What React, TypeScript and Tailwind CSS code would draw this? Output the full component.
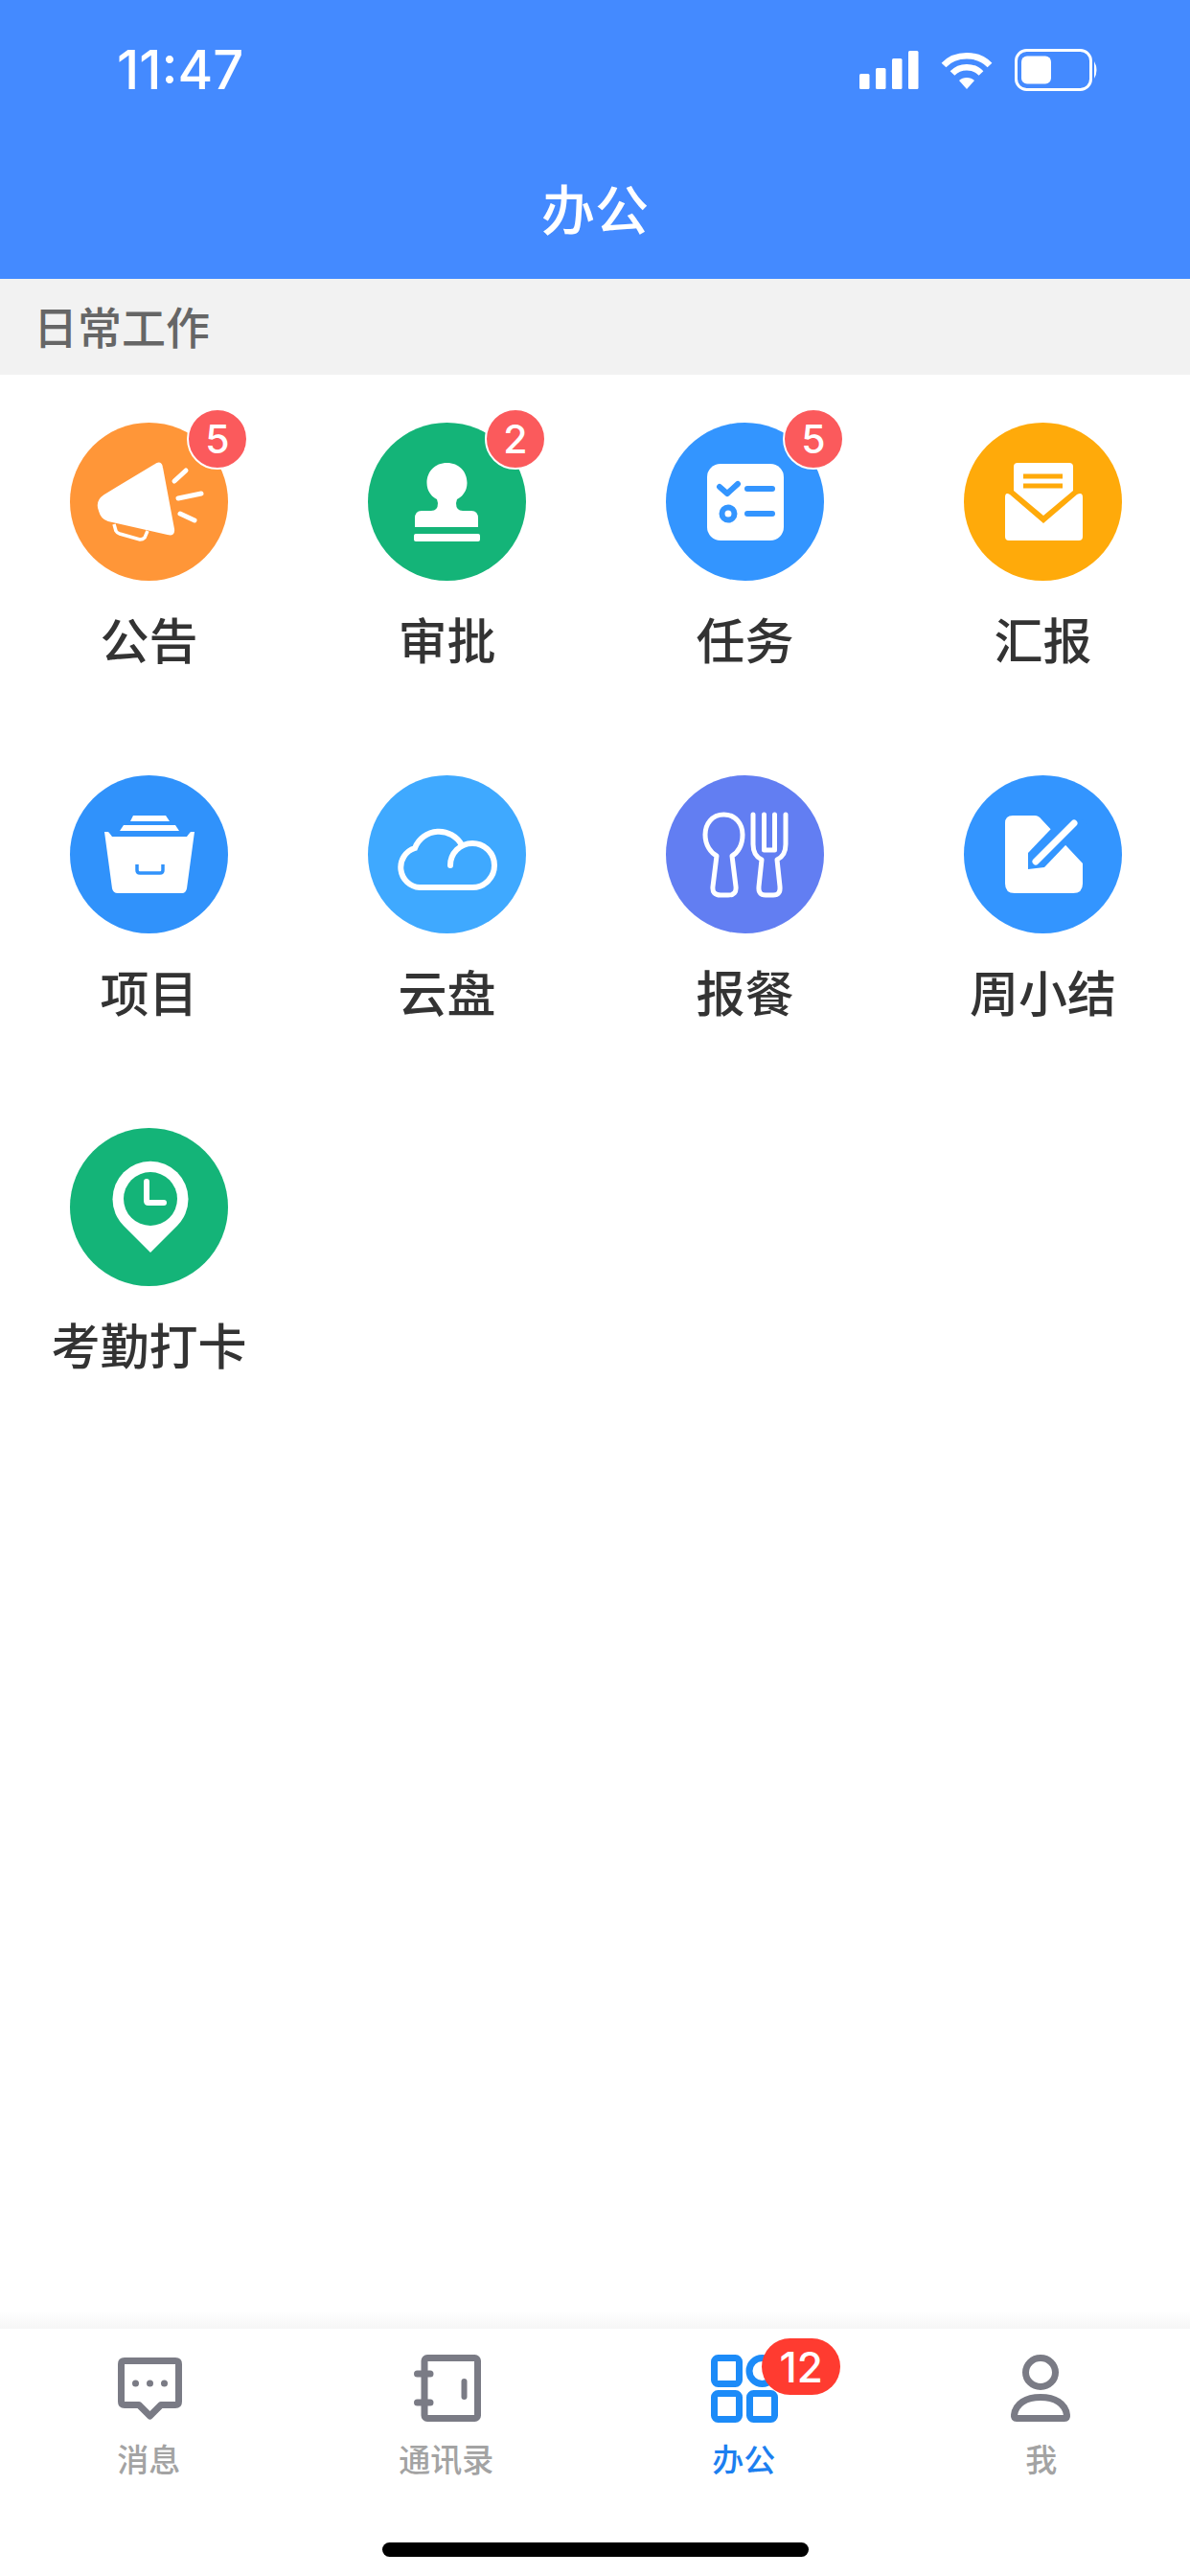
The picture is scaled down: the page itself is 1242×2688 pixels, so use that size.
import type { ReactNode } from "react";

const CJK = "font-['Noto_Sans_CJK_SC','Noto_Sans',sans-serif]";

type App = { name: string; color: string; badge?: number; glyph: ReactNode };

const megaphone = (
  <>
    <path d="M89 44 Q95 40 96 47 L108 111 Q109 118 102 116 L40 102 Q33 100 31 92 Q27 82 36 76 Z" fill="#fff" stroke="#fff" strokeWidth="2" strokeLinejoin="round" />
    <path d="M46 106 L48 113 Q49 115 52 116 L73 122 Q76 122 78 120 L81 113" fill="none" stroke="#fff" strokeWidth="3.5" />
    <g stroke="#fff" strokeWidth="5" strokeLinecap="round">
      <path d="M109 61 L121 50" />
      <path d="M113 79 L137 74" />
      <path d="M115 95 L130 102" />
    </g>
  </>
);

const stamp = (
  <>
    <path d="M82.5 42 C70 42 61.5 51 61.5 63 C61.5 71 66 77 72 80 L73 84 Q73 92 66 92 H56 Q49 92 49 100 V109 H115 V100 Q115 92 108 92 H99 Q92 92 92 84 L93 80 C99 77 103.5 71 103.5 63 C103.5 51 95 42 82.5 42 Z" fill="#fff" />
    <rect x="48" y="116" width="69" height="8" rx="2" fill="#fff" />
  </>
);

const checklist = (
  <>
    <rect x="43" y="43" width="80" height="80" rx="14" fill="#fff" />
    <g fill="none" stroke="#3395ff" strokeLinecap="round" strokeLinejoin="round" strokeWidth="6">
      <path d="M56 67 L64 74 L75 64" />
      <path d="M85 69 H111" />
      <path d="M85 95 H111" />
      <circle cx="65" cy="95" r="6.5" />
    </g>
  </>
);

const envelope = (
  <>
    <path d="M43 78 Q43 72 48 75 L83 105 L118 75 Q124 72 124 78 V119 Q124 123 120 123 H47 Q43 123 43 119 Z" fill="#fff" />
    <path d="M52 46 Q52 42 56 42 H110 Q114 42 114 46 V71 L83 97 L52 71 Z" fill="#fff" />
    <path d="M62 56 H103 M62 66 H103" stroke="#ffaa0a" strokeWidth="5" />
  </>
);

const basket = (
  <>
    <path d="M36 59 L40 59 Q42 61 44 64 H122 Q124 61 126 59 H130 L122 118 Q121 123 117 123 H50 Q45 123 44 118 Z" fill="#fff" />
    <path d="M56 52 H110 L114 58 H52 Z" fill="#fff" />
    <path d="M66 42 H100 L104 48 H63 Z" fill="#fff" />
    <path d="M70 93 V99 Q70 102 73 102 H94 Q97 102 97 99 V93" fill="none" stroke="#3092fb" strokeWidth="3.5" />
  </>
);

const cloud = (
  <path d="M54 117 H109 A23 23 0 0 0 109 71 A23 23 0 0 0 86 94 M54 117 A21 21 0 0 1 49 76 A27 27 0 0 1 98 73" fill="none" stroke="#fff" strokeWidth="6" strokeLinecap="round" />
);

const cutlery = (
  <g fill="none" stroke="#fff" strokeWidth="5" strokeLinejoin="round" strokeLinecap="round">
    <path d="M60.5 41 C48 41 41 51 41 62 C41 73 47 81 53 84 L49 116 Q48 125 57 125 H65 Q74 125 73 116 L69 84 C75 81 80 73 80 62 C80 51 73 41 60.5 41 Z" />
    <path d="M91 41 V72 Q91 84 100 88 L97 116 Q96 125 104 125 H112 Q120 125 119 116 L116 88 Q125 84 125 72 V41 M102.5 41 V78 H113.5 V41" />
  </g>
);

const noteEdit = (
  <>
    <path d="M51 42 H74 Q78 42 81 46 L124 92 V113 Q124 123 114 123 H53 Q43 123 43 113 V50 Q43 42 51 42 Z" fill="#fff" />
    <path d="M67 98 V81 L110 36 L128 50 L84 96 Z" fill="#3395ff" />
    <path d="M75 90 L115 50" stroke="#fff" strokeWidth="7" strokeLinecap="round" />
  </>
);

const clockPin = (
  <>
    <path d="M84 130 L56 102 A39.5 39.5 0 1 1 112 102 Z" fill="#fff" />
    <circle cx="84" cy="74" r="28" fill="#14b478" />
    <path d="M80 56 V76 Q80 78 82 78 H98" fill="none" stroke="#fff" strokeWidth="6" strokeLinecap="round" />
  </>
);

const apps: App[] = [
  { name: "公告", color: "bg-[#ff9638]", badge: 5, glyph: megaphone },
  { name: "审批", color: "bg-[#14b478]", badge: 2, glyph: stamp },
  { name: "任务", color: "bg-[#3395ff]", badge: 5, glyph: checklist },
  { name: "汇报", color: "bg-[#ffaa0a]", glyph: envelope },
  { name: "项目", color: "bg-[#3092fb]", glyph: basket },
  { name: "云盘", color: "bg-[#3fa9ff]", glyph: cloud },
  { name: "报餐", color: "bg-[#627ef2]", glyph: cutlery },
  { name: "周小结", color: "bg-[#3395ff]", glyph: noteEdit },
  { name: "考勤打卡", color: "bg-[#14b478]", glyph: clockPin },
];

function StatusBar() {
  return (
    <div className="flex h-[146px] items-center justify-between pl-[122px] pr-[95px] text-white">
      <span className="font-['Inter',sans-serif] text-[56px] leading-none font-medium">11:47</span>
      <div className="flex items-center gap-[23px]">
        <svg width="62" height="40" viewBox="0 0 62 40" fill="#fff">
          <rect x="0" y="24" width="10.5" height="16" rx="1.5" />
          <rect x="17" y="18" width="10.5" height="22" rx="1.5" />
          <rect x="34" y="8" width="10.5" height="32" rx="1.5" />
          <rect x="51" y="0" width="10.5" height="40" rx="1.5" />
        </svg>
        <svg width="54" height="40" viewBox="0 0 54 40" fill="none" stroke="#fff" strokeWidth="6.5">
          <path d="M3 15 C15 2 39 2 51 15" />
          <path d="M12 23.5 C20 15 34 15 42 23.5" />
          <path d="M27 40 L19 31 C23 27 31 27 35 31 Z" fill="#fff" stroke="none" />
        </svg>
        <svg width="88" height="44" viewBox="0 0 88 44" fill="none">
          <rect x="1.5" y="1.5" width="78" height="41" rx="11" stroke="#fff" strokeWidth="3" />
          <rect x="7" y="7.5" width="31" height="29" rx="6" fill="#fff" />
          <path d="M83 13 Q88 22 83 31 Z" fill="#fff" />
        </svg>
      </div>
    </div>
  );
}

function AppTile({ app }: { app: App }) {
  return (
    <div className="flex flex-col items-center">
      <div className={`relative h-[165px] w-[165px] rounded-full ${app.color}`}>
        <svg width="165" height="165" viewBox="0 0 165 165">{app.glyph}</svg>
        {app.badge !== undefined && (
          <span className="absolute -right-[21px] -top-[15px] flex h-[64px] w-[64px] items-center justify-center rounded-full border-2 border-white bg-[#fb5a5c] font-['Inter',sans-serif] text-[41px] leading-none font-medium text-white">
            {app.badge}
          </span>
        )}
      </div>
      <span className={`mt-[30px] h-[64px] whitespace-nowrap text-[51px] leading-[60px] font-medium text-[#333] ${CJK}`}>
        {app.name}
      </span>
    </div>
  );
}

const GRAY = "#7a7b85";
const BLUE = "#1c8bf8";

function TabBar() {
  return (
    <div className="flex h-[258px] flex-col items-center bg-white">
      <div className="grid w-full grid-cols-4 pt-[26px]">
        <Tab label="消息">
          <svg width="72" height="72" viewBox="0 0 72 72" fill="none" stroke={GRAY} strokeWidth="7" strokeLinejoin="round">
            <path d="M11 7.5 H64 Q67.5 7.5 67.5 11 V50 Q67.5 53.5 64 53.5 H49 L37.5 65 L26 53.5 H11 Q7.5 53.5 7.5 50 V11 Q7.5 7.5 11 7.5 Z" />
            <g fill={GRAY} stroke="none">
              <circle cx="22.5" cy="31" r="3.5" />
              <circle cx="37.5" cy="31" r="3.5" />
              <circle cx="52.5" cy="31" r="3.5" />
            </g>
          </svg>
        </Tab>
        <Tab label="通讯录">
          <svg width="72" height="72" viewBox="0 0 72 72" fill="none" stroke={GRAY} strokeWidth="7" strokeLinecap="round" className="overflow-visible">
            <rect x="13" y="4.5" width="55.5" height="63" rx="3" />
            <path d="M5.5 21 H19 M5.5 51 H19" />
            <path d="M54.5 29 V45" strokeWidth="6" />
          </svg>
        </Tab>
        <Tab label="办公" active badge="12">
          <svg width="72" height="72" viewBox="0 0 72 72" fill="none" stroke={BLUE} strokeWidth="7">
            <rect x="5.5" y="4.5" width="26" height="27" rx="4" />
            <circle cx="55.5" cy="18" r="13.5" />
            <rect x="5.5" y="41.5" width="26" height="27" rx="4" />
            <rect x="42.5" y="41.5" width="26" height="27" rx="4" />
          </svg>
        </Tab>
        <Tab label="我">
          <svg width="72" height="72" viewBox="0 0 72 72" fill="none" stroke={GRAY} strokeWidth="7" strokeLinejoin="round">
            <ellipse cx="35" cy="19.5" rx="15.5" ry="15" />
            <path d="M10 67.5 H60 Q63 67.5 62.5 64 C61 52 50 45.5 35 45.5 C20 45.5 9 52 7.5 64 Q7 67.5 10 67.5 Z" />
          </svg>
        </Tab>
      </div>
      <div className="mb-[20px] mt-auto h-[15px] w-[445px] rounded-full bg-black" />
    </div>
  );
}

function Tab({ label, active, badge, children }: { label: string; active?: boolean; badge?: string; children: ReactNode }) {
  return (
    <div className="flex flex-col items-center">
      <div className="relative h-[72px] w-[72px]">
        {children}
        {badge && (
          <span className="absolute -top-[16px] left-[55px] flex h-[59px] w-[82px] items-center justify-center rounded-full bg-[#ff3b30] font-['Inter',sans-serif] text-[44px] leading-none font-medium text-white">
            {badge}
          </span>
        )}
      </div>
      <span className={`mt-[17px] text-[33px] leading-[40px] font-medium ${active ? "text-[#1c7ff0]" : "text-[#a3a3a3]"} ${CJK}`}>
        {label}
      </span>
    </div>
  );
}

export default function App() {
  return (
    <div className="flex h-[2688px] w-[1242px] flex-col overflow-hidden bg-white">
      <header className="h-[291px] bg-[#448aff]">
        <StatusBar />
        <h1 className={`flex h-[140px] items-center justify-center text-[56px] font-medium text-white ${CJK}`}>办公</h1>
      </header>
      <div className={`flex h-[100px] items-center bg-[#f2f2f2] pb-[4px] pl-[35px] text-[46px] leading-none text-[#666] font-medium ${CJK}`}>
        日常工作
      </div>
      <main className="grid grid-cols-[repeat(4,311px)] gap-y-[109px] pt-[50px]">
        {apps.map((app) => (
          <AppTile key={app.name} app={app} />
        ))}
      </main>
      <div className="flex-1" />
      <div className="h-[18px] bg-gradient-to-b from-white to-[#f6f6f6]" />
      <TabBar />
    </div>
  );
}
